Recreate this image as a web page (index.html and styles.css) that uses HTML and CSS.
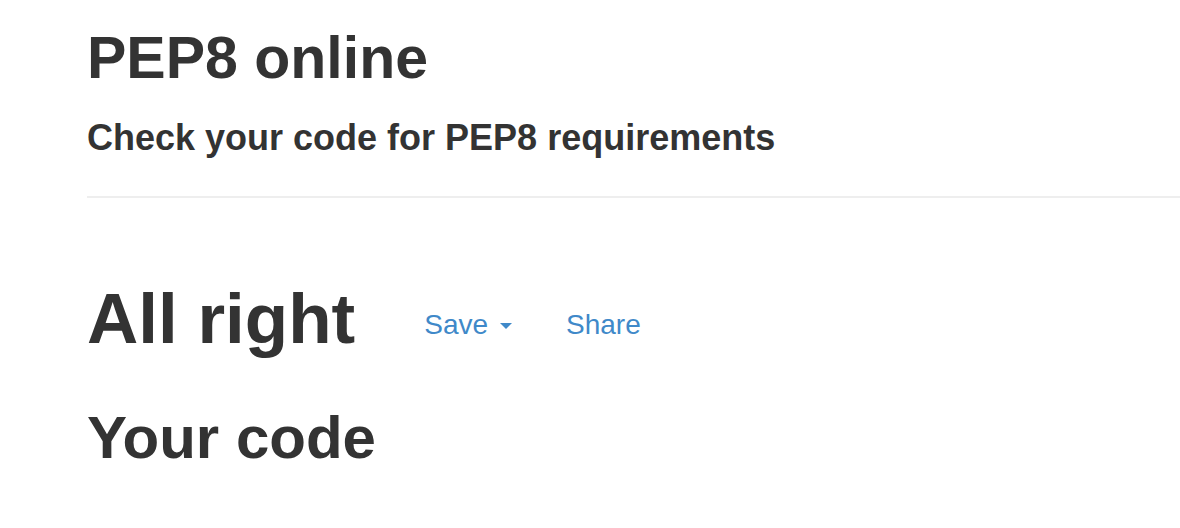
FILE: index.html
```html
<!DOCTYPE html>
<html>
<head>
<meta charset="utf-8">
<title>PEP8 online</title>
<link rel="stylesheet" href="styles.css">
</head>
<body>
<div class="container">
  <header class="page-header">
    <h1 class="title">PEP8 online</h1>
    <h2 class="subtitle">Check your code for PEP8 requirements</h2>
  </header>
  <div class="result-row">
    <h1 class="result">All right</h1>
    <nav class="actions">
      <a class="action" href="#">Save <span class="caret"></span></a>
      <a class="action share" href="#">Share</a>
    </nav>
  </div>
  <h1 class="section">Your code</h1>
</div>
</body>
</html>
```

FILE: styles.css
```css
html, body {
  margin: 0;
  padding: 0;
  background: #fff;
}
body {
  font-family: "Liberation Sans", Arial, Helvetica, sans-serif;
  color: #333;
  overflow: hidden;
}
.container {
  padding-left: 87px;
}
h1, h2 {
  margin: 0;
  font-weight: bold;
}
.page-header {
  padding-top: 25px;
  border-bottom: 2px solid #eee;
  padding-bottom: 38px;
}
.title {
  font-size: 59px;
  line-height: 66px;
}
.subtitle {
  font-size: 36px;
  line-height: 40px;
  margin-top: 27px;
}
.result-row {
  display: flex;
  align-items: flex-start;
  margin-top: 81px;
}
.result {
  font-size: 71px;
  line-height: 80px;
}
.actions {
  display: flex;
  align-items: center;
  padding-top: 26px;
  margin-left: 69px;
  gap: 54px;
}
.action {
  font-size: 28px;
  line-height: 40px;
  color: #3f89c9;
  text-decoration: none;
  display: flex;
  align-items: center;
}
.caret {
  display: inline-block;
  width: 0;
  height: 0;
  margin-left: 12px;
  margin-top: 2px;
  border-top: 6px solid #3f89c9;
  border-left: 6px solid transparent;
  border-right: 6px solid transparent;
}
.section {
  font-size: 60px;
  line-height: 66px;
  margin-top: 46px;
}
```
